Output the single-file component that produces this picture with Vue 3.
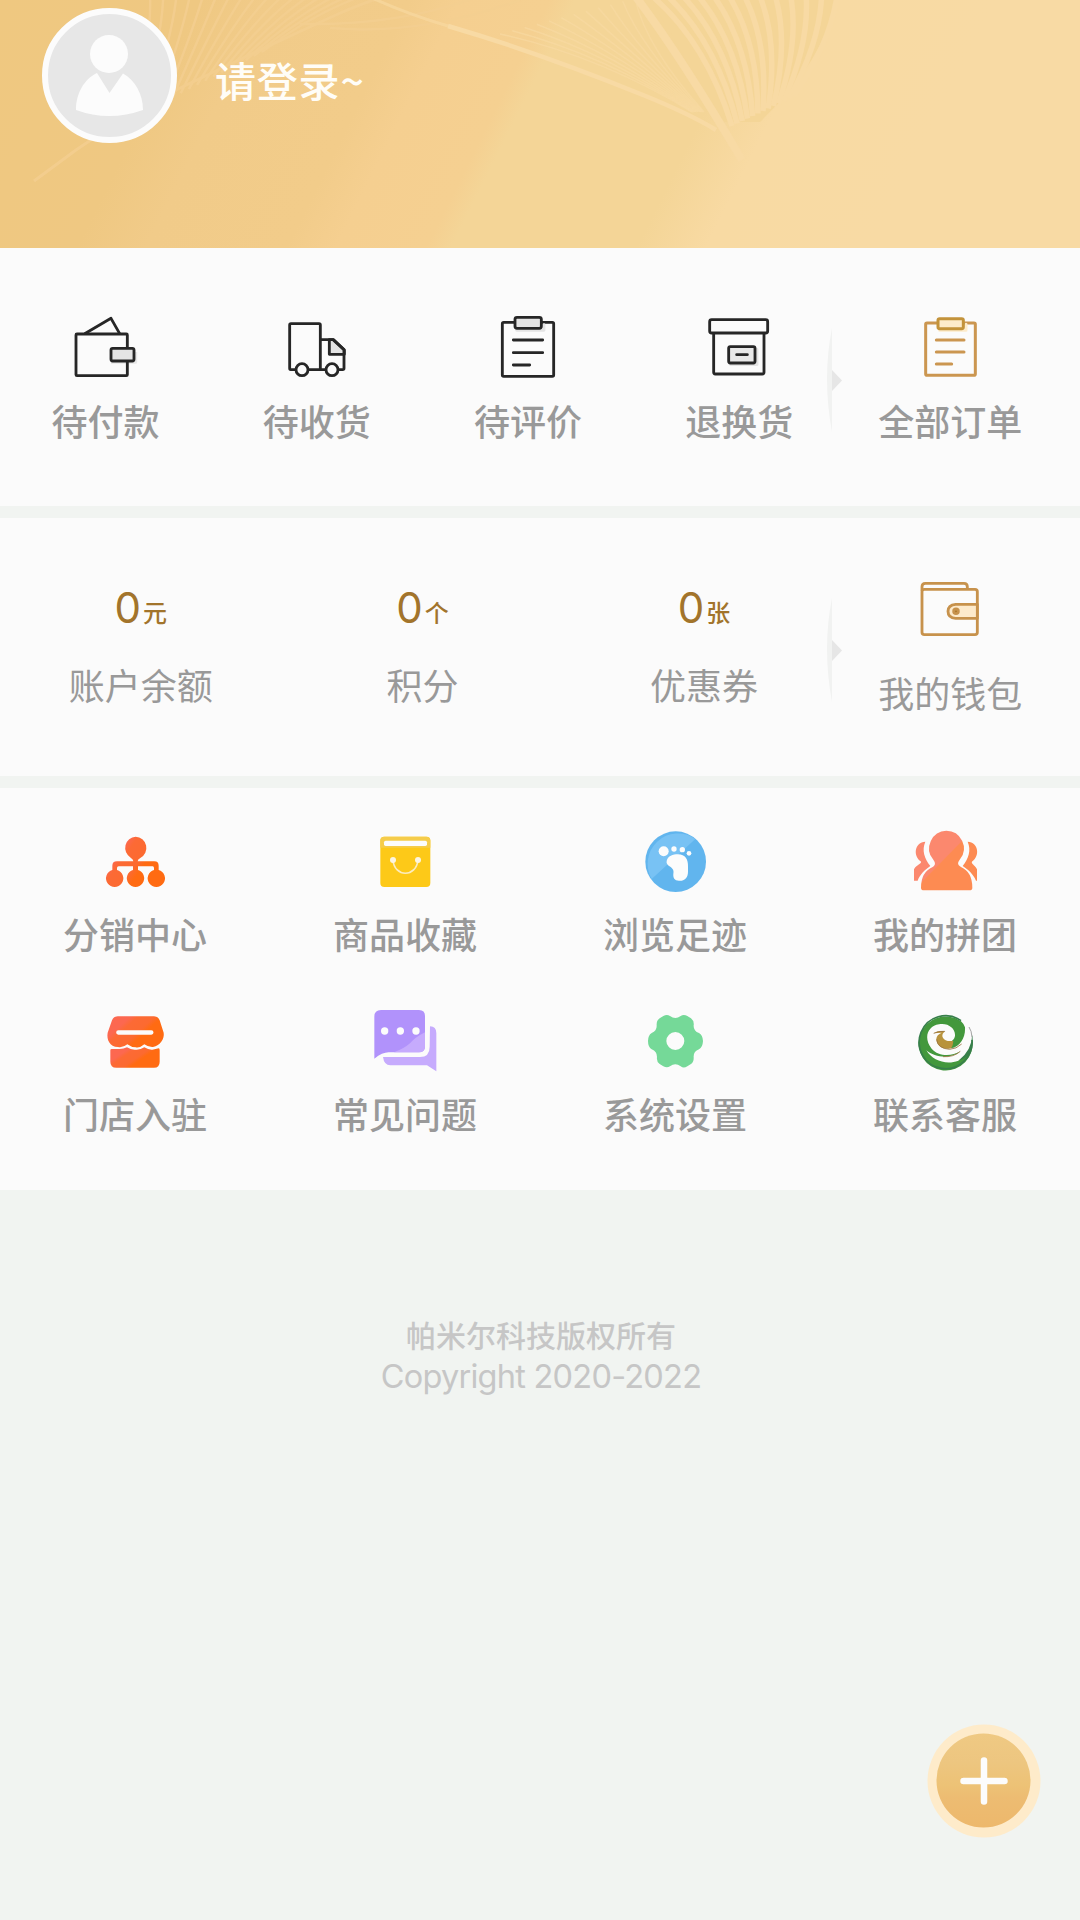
<script setup>
const orders = [
  { icon: 'pay', label: '待付款' },
  { icon: 'ship', label: '待收货' },
  { icon: 'review', label: '待评价' },
  { icon: 'refund', label: '退换货' },
]
const assets = [
  { value: 0, unit: '元', label: '账户余额' },
  { value: 0, unit: '个', label: '积分' },
  { value: 0, unit: '张', label: '优惠券' },
]
const services = [
  { icon: 'tree', label: '分销中心' },
  { icon: 'bag', label: '商品收藏' },
  { icon: 'foot', label: '浏览足迹' },
  { icon: 'group', label: '我的拼团' },
  { icon: 'shop', label: '门店入驻' },
  { icon: 'chat', label: '常见问题' },
  { icon: 'gear', label: '系统设置' },
  { icon: 'swirl', label: '联系客服' },
]

const rightWaves = Array.from({ length: 13 }, (_, i) => {
  const t = i / 12
  return `M${652 + t * 185} -4Q${706 + t * 124} ${42 + t * 2} ${732 + t * 62} ${126 - t * 30}`
})
const midWaves = Array.from({ length: 12 }, (_, i) => {
  const t = i / 11
  return `M${500 + t * 135} ${34 - t * 36}Q${600 + t * 45} ${56 - t * 10} ${692 + t * 12} ${112}`
})
const leftWaves = Array.from({ length: 17 }, (_, i) => {
  const t = i / 16
  return `M${150 + t * 212} -4Q${152 + t * 160} ${40 - t * 26} ${132 + t * 130} ${118 - t * 66}`
})
</script>

<template>
  <main class="page">
    <header class="hero">
      <svg class="hero-bg" viewBox="0 0 1080 248" aria-hidden="true">
        <defs>
          <linearGradient id="gold" gradientUnits="userSpaceOnUse" x1="0" y1="0" x2="800" y2="400">
            <stop offset="0" stop-color="#efc880" />
            <stop offset=".2" stop-color="#efc882" />
            <stop offset=".27" stop-color="#f1cb89" />
            <stop offset=".41" stop-color="#f2cc8a" />
            <stop offset=".46" stop-color="#f5cf90" />
            <stop offset=".55" stop-color="#f5d091" />
            <stop offset=".575" stop-color="#f4d597" />
            <stop offset=".76" stop-color="#f4d597" />
            <stop offset=".83" stop-color="#f8daa3" />
            <stop offset="1" stop-color="#f8daa4" />
          </linearGradient>
        </defs>
        <rect width="1080" height="248" fill="url(#gold)" />
        <path d="M650 0H835Q825 60 760 122L715 122Q690 60 650 0Z" fill="#f4d597" />
        <g fill="none" stroke="#f4cf91" stroke-width="2.5" opacity=".8">
          <path v-for="d in leftWaves" :key="d" :d="d" />
          <path d="M34 181L76 150Q125 116 178 89L243 58L327 19Q350 8 376 -1" stroke-width="3" />
          <path d="M330 28Q420 36 520 0" />
          <path d="M300 24Q400 26 480 -4" />
        </g>
        <g fill="none" stroke="#f8daa4">
          <path v-for="d in midWaves" :key="d" :d="d" stroke-width="1.5" opacity=".6" />
          <path v-for="d in rightWaves" :key="d" :d="d" stroke-width="5.500" />
          <path d="M372 -2Q410 15 448 26" stroke-width="3" opacity=".6" />
          <path d="M448 26Q540 53 643 95Q690 114 716 130" stroke-width="4.500" />
          <path d="M636 -3Q680 55 742 160" stroke-width="8" />
        </g>
      </svg>
      <div class="avatar">
        <svg viewBox="0 0 135 135">
          <circle cx="67.5" cy="67.5" r="64.5" fill="#e7e7e7" stroke="#fcfcfc" stroke-width="6" />
          <circle cx="67" cy="46" r="19" fill="#fcfcfc" />
          <path d="M55 65L67.5 85L81 65.500C93 72 101 86 101 102Q67 114 34 102C34 86 42 71 55 65Z" fill="#fcfcfc" />
        </svg>
      </div>
      <span class="login">请登录~</span>
    </header>

    <section class="panel strip">
      <div v-for="o in orders" :key="o.icon" class="order">
        <svg v-if="o.icon === 'pay'" class="icon" viewBox="119 66 216 216" fill="none" stroke="#262626" stroke-width="8.500" stroke-linejoin="round">
          <path d="M242 217H316V186" stroke="#e8e8e8" stroke-width="9" />
          <path d="M163 131L242 85L268 131" />
          <rect x="137" y="132" width="154" height="125" rx="3" />
          <rect x="242" y="175" width="69" height="38" rx="5" fill="#e4e4e4" />
        </svg>
        <svg v-else-if="o.icon === 'ship'" class="icon" viewBox="753 66 216 216" fill="none" stroke="#262626" stroke-width="8.500" stroke-linejoin="round">
          <path d="M898 149L911 149L943 180V193H898Z" fill="#e4e4e4" />
          <path d="M871 149H909L942 179V235Q942 239 938 239H782Q779 239 779 235V105Q779 101 783 101H867Q871 101 871 105V239" />
          <circle cx="816" cy="239" r="18" fill="#fcfcfc" />
          <circle cx="906" cy="239" r="18" fill="#fcfcfc" />
        </svg>
        <svg v-else-if="o.icon === 'review'" class="icon" viewBox="186 66 216 216" fill="none" stroke="#262626" stroke-width="8.500" stroke-linejoin="round" stroke-linecap="round">
          <rect x="217" y="97" width="154" height="162" rx="4" />
          <path d="M260 121H342V104" stroke="#e4e4e4" />
          <rect x="255" y="82" width="79" height="33" rx="6" fill="#e4e4e4" />
          <path d="M250 150H338M250 188H338M250 225H299" />
        </svg>
        <svg v-else class="icon" viewBox="820 66 216 216" fill="none" stroke="#262626" stroke-width="8.500" stroke-linejoin="round" stroke-linecap="round">
          <rect x="840" y="89" width="174" height="40" rx="6" />
          <path d="M852 130V247Q852 252 857 252H998Q1003 252 1003 247V130" />
          <path d="M903 224H982V178" stroke="#e4e4e4" />
          <rect x="897" y="170" width="79" height="49" rx="5" fill="#e8e8e8" />
          <path d="M921 194H953" />
        </svg>
        <span class="label">{{ o.label }}</span>
      </div>
      <div class="order last">
        <svg class="divider" viewBox="0 0 20 108"><path d="M7 2Q-3 52 7 106Z" fill="#f1f2f1" /><path d="M7 44L17 54.500L7 65Z" fill="#e6e6e6" /></svg>
        <svg class="icon" viewBox="343 66 216 216" fill="none" stroke="#cb9650" stroke-width="9" stroke-linejoin="round" stroke-linecap="round">
          <rect x="378" y="99" width="149" height="157" rx="4" />
          <path d="M420 121H499V103" stroke="#fdebcb" />
          <rect x="415" y="86" width="76" height="30" rx="5" fill="#fdebcb" stroke="#c3933b" />
          <path d="M410 150H493M410 186H493M410 222H456" />
        </svg>
        <span class="label">全部订单</span>
      </div>
    </section>

    <section class="panel strip">
      <div v-for="a in assets" :key="a.label" class="asset">
        <p class="amount">{{ a.value }}<small>{{ a.unit }}</small></p>
        <span class="label thin">{{ a.label }}</span>
      </div>
      <div class="order last wallet">
        <svg class="divider" viewBox="0 0 20 108"><path d="M7 2Q-3 52 7 106Z" fill="#f1f2f1" /><path d="M7 44L17 54.500L7 65Z" fill="#e6e6e6" /></svg>
        <svg class="icon" viewBox="943 39 216 216" fill="none" stroke="#c7924c" stroke-width="8.500" stroke-linejoin="round">
          <path d="M967 92V80Q967 70 977 70H1093Q1103 70 1103 80V86" />
          <rect x="967" y="88" width="166" height="136" rx="7" />
          <path d="M1133 133H1068Q1045 135 1045 154Q1045 174 1068 175H1133Z" fill="#fdeacb" />
          <circle cx="1069" cy="154" r="7" fill="#a87426" />
        </svg>
        <span class="label thin">我的钱包</span>
      </div>
    </section>

    <section class="panel services">
      <div v-for="s in services" :key="s.icon" class="service">
        <svg v-if="s.icon === 'tree'" class="icon" viewBox="177 44 216 216">
          <defs><linearGradient id="orange" x1="0" y1="0" x2="1" y2=".6"><stop offset=".3" stop-color="#fc6850" /><stop offset=".4" stop-color="#fc6a35" /><stop offset=".62" stop-color="#fc6a30" /><stop offset=".72" stop-color="#ff6b12" /></linearGradient></defs>
          <g fill="url(#orange)">
            <path d="M287 79A34 34 0 0 1 301 143Q293 147 293 153H343Q356 153 356 166V179A26 26 0 1 1 342 179V173Q342 168 338 168H294V179A26 26 0 1 1 279 179V168H236Q231 168 231 173V179A26 26 0 1 1 217 179V166Q217 153 231 153H280Q280 147 272 142A34 34 0 0 1 287 79Z" />
          </g>
        </svg>
        <svg v-else-if="s.icon === 'bag'" class="icon" viewBox="987 44 216 216" fill="none">
          <rect x="1021" y="79" width="150" height="151" rx="12" fill="#fdc918" />
          <path d="M1021 112V91Q1021 79 1033 79H1159Q1171 79 1171 91V112Z" fill="#f5cc4a" />
          <rect x="1032" y="91" width="129" height="16" rx="5" fill="#fcfcfc" />
          <path d="M1059 149C1063 202 1129 202 1134 149" stroke="#fbecc0" stroke-width="5" />
          <circle cx="1059" cy="149" r="9" fill="#fcf5e0" /><circle cx="1134" cy="149" r="9" fill="#fcf5e0" />
        </svg>
        <svg v-else-if="s.icon === 'foot'" class="icon" viewBox="237 44 216 216">
          <circle cx="347" cy="154" r="91" fill="#61b5ee" />
          <path d="M275 206A91 91 0 0 1 406 86Z" fill="#78c2f4" />
          <g fill="#fcfcfc"><circle cx="311" cy="123" r="15" /><circle cx="342" cy="116" r="8" /><circle cx="367" cy="118" r="8" /><circle cx="387" cy="129" r="7" /><path d="M320 152C323 137 339 132 354 132C376 132 385 148 384 169V184C384 203 373 212 357 211C343 211 339 202 340 191C342 180 339 176 332 170C323 165 318 160 320 152Z" /></g>
        </svg>
        <svg v-else-if="s.icon === 'group'" class="icon" viewBox="1047 44 216 216">
          <defs><linearGradient id="coral" gradientUnits="userSpaceOnUse" x1="1100" y1="90" x2="1210" y2="198"><stop offset=".49" stop-color="#fb886e" /><stop offset=".51" stop-color="#fd8b52" /></linearGradient></defs>
          <g fill="url(#coral)">
            <path d="M1096 94C1063 96 1059 136 1082 153C1088 160 1070 162 1062 177V211H1073C1080 192 1095 178 1111 167C1093 145 1085 119 1096 94Z" />
            <path d="M1223 94C1256 96 1260 136 1237 153C1231 160 1243 162 1251 177V211H1248C1240 192 1225 178 1208 167C1226 145 1234 119 1223 94Z" />
            <path d="M1159 61A53 53 0 0 1 1200 147C1193 157 1191 163 1203 170Q1237 185 1237 232Q1237 240 1228 240H1092Q1083 240 1083 232Q1083 185 1118 170C1128 164 1126 157 1119 147A53 53 0 0 1 1159 61Z" />
          </g>
        </svg>
        <svg v-else-if="s.icon === 'shop'" class="icon" viewBox="177 584 216 216">
          <g fill="url(#orange)">
            <path fill-rule="evenodd" d="M233 618H342Q354 618 359 630L371 667C374 685 361 705 339 710Q325 711 313 702Q299 714 287 711Q274 711 262 702Q249 713 234 710C209 709 199 687 203 667L216 630Q221 618 233 618ZM235 660A6.500 6.500 0 0 0 235 673H334A6.500 6.500 0 0 0 334 660Z" />
            <path d="M215 716H235Q249 717 261 711Q273 719 287 718Q301 719 313 711Q326 719 337 718L356 714Q359 714 359 720V754Q359 772 342 772H229Q211 772 211 754V720Q211 716 215 716Z" />
          </g>
        </svg>
        <svg v-else-if="s.icon === 'chat'" class="icon" viewBox="987 585 216 216">
          <path d="M1023 600H1137Q1155 600 1155 618V709Q1155 727 1137 727H1046Q1027 727 1003 746V620Q1003 600 1023 600Z" fill="#b192fb" />
          <path d="M1155 667V709Q1155 727 1137 727H1062Q1092 716 1110 700Q1125 682 1155 667Z" fill="#c6abfd" />
          <path d="M1170 649Q1189 650 1189 669V784L1161 766H1051Q1032 765 1029 741H1140Q1169 741 1169 710Z" fill="#c6abfd" />
          <g fill="#fcfcfc"><circle cx="1034" cy="663" r="11" /><circle cx="1081" cy="663" r="11" /><circle cx="1128" cy="663" r="11" /></g>
        </svg>
        <svg v-else-if="s.icon === 'gear'" class="icon" viewBox="237 584 216 216">
          <path fill-rule="evenodd" fill="#75d998" d="M310 617Q321 611 330 617Q346 629 362 617Q371 611 382 617L393 624Q403 632 401 645Q400 662 417 668Q428 674 429 692Q428 711 417 717Q400 723 401 740Q402 755 393 761L382 768Q371 775 362 768Q346 756 330 768Q321 774 310 768L299 761Q289 754 291 740Q291 723 275 717Q264 710 264 692Q264 675 275 668Q291 662 290 645Q289 631 299 624ZM346 665A27 27 0 1 0 346 719A27 27 0 1 0 346 665Z" />
        </svg>
        <svg v-else class="icon" viewBox="1048 585 216 216" fill="none">
          <path d="M1216 652A40 42 0 0 0 1204 634A81 81 0 1 0 1238 688C1236 720 1218 742 1196 752C1160 766 1118 752 1100 721C1126 744 1176 748 1202 724C1176 740 1136 740 1116 716C1090 684 1104 648 1138 643C1166 638 1188 656 1186 678C1184 688 1178 693 1172 696L1174 715C1202 710 1218 682 1216 652Z" fill="#43983c" />
          <path d="M1204 632A79.500 79.500 0 1 0 1237 690" stroke="#377f4b" stroke-width="5" />
          <path d="M1238 674Q1236 722 1196 752Q1240 740 1239 690Z" fill="#377f4b" />
          <path d="M1122 670Q1136 661 1157 664C1142 672 1147 690 1164 693H1181Q1179 711 1174 715C1148 722 1129 704 1130 687Q1131 674 1146 668Z" fill="#b8933c" />
          <path d="M1122 670Q1136 662 1155 664M1131 688Q1134 716 1170 718Q1190 717 1206 702M1150 740Q1182 742 1202 724" stroke="#9a7440" stroke-width="2.500" />
          <path d="M1228 651Q1236 662 1237 682" stroke="#777" stroke-width="2" />
        </svg>
        <span class="label">{{ s.label }}</span>
      </div>
    </section>

    <footer class="copyright">
      <p class="owner">帕米尔科技版权所有</p>
      <p class="years">Copyright 2020-2022</p>
    </footer>

    <button class="fab" aria-label="add">
      <svg viewBox="0 0 116 116">
        <defs><linearGradient id="fab" x1="0" y1="0" x2="0" y2="1"><stop offset="0" stop-color="#efc983" /><stop offset=".3" stop-color="#edc680" /><stop offset=".55" stop-color="#edc276" /><stop offset=".68" stop-color="#edbc72" /><stop offset="1" stop-color="#edb86c" /></linearGradient></defs>
        <circle cx="58" cy="58" r="56.500" fill="#feebca" />
        <circle cx="57.500" cy="57.500" r="47" fill="url(#fab)" />
        <path d="M58 37.500V78.500M37.500 58H78.500" stroke="#fcfcfc" stroke-width="6.500" stroke-linecap="round" />
      </svg>
    </button>
  </main>
</template>

<style>
body {
  margin: 0;
  background: #f1f4f1;
}
</style>

<style scoped>
.page {
  position: relative;
  width: 1080px;
  height: 1920px;
  overflow: hidden;
  background: #f1f4f1;
  font-family: "Noto Sans CJK SC", "Noto Sans", sans-serif;
  color: #999;
}
p { margin: 0; }
svg { display: block; }
.hero {
  position: relative;
  box-sizing: border-box;
  height: 248px;
  padding: 8px 0 0 42px;
  display: flex;
  align-items: flex-start;
  gap: 38px;
}
.hero-bg {
  position: absolute;
  inset: 0;
  width: 1080px;
  height: 248px;
}
.avatar {
  position: relative;
  width: 135px;
  height: 135px;
}
.login {
  position: relative;
  margin-top: 41px;
  font-size: 41px;
  line-height: 60px;
  font-weight: 500;
  letter-spacing: 0.8px;
  color: #fffdf8;
}
.panel { background: #fbfbfb; }
.strip {
  display: flex;
  height: 258px;
  margin-bottom: 12px;
}
.order {
  position: relative;
  width: 211.2px;
  padding-top: 64px;
  display: flex;
  flex-direction: column;
  align-items: center;
}
.icon {
  width: 72px;
  height: 72px;
}
.label {
  margin-top: 16px;
  font-size: 36px;
  line-height: 40px;
  font-weight: 500;
  white-space: nowrap;
}
.label.thin { font-weight: 400; }
.divider {
  position: absolute;
  left: -20px;
  top: 78px;
  width: 20px;
  height: 108px;
}
.asset {
  width: 281.6px;
  padding-top: 60px;
  text-align: center;
}
.amount {
  height: 60px;
  line-height: 60px;
  font-family: Inter, "Noto Sans CJK SC", sans-serif;
  font-size: 42px;
  color: #a2742b;
}
.amount small {
  margin-left: 2px;
  font-size: 24px;
  line-height: 1;
  font-weight: 500;
  vertical-align: 1px;
}
.asset .label {
  display: block;
  margin-top: 26px;
}
.wallet { padding-top: 55px; }
.wallet .label { margin-top: 27px; }
.services {
  display: grid;
  grid-template-columns: repeat(4, 270px);
  grid-auto-rows: 180px;
  box-sizing: border-box;
  height: 402px;
  padding-top: 37px;
}
.service {
  display: flex;
  flex-direction: column;
  align-items: center;
}
.copyright {
  padding: 123px 0 0 2px;
  text-align: center;
  color: #c6c6c6;
}
.owner {
  font-size: 30px;
  line-height: 42px;
  font-weight: 500;
}
.years {
  font-family: Inter, sans-serif;
  font-size: 32.500px;
  line-height: 44px;
  letter-spacing: -0.75px;
}
.fab {
  position: absolute;
  left: 926px;
  top: 1723px;
  width: 116px;
  height: 116px;
  padding: 0;
  border: 0;
  background: none;
}
</style>
